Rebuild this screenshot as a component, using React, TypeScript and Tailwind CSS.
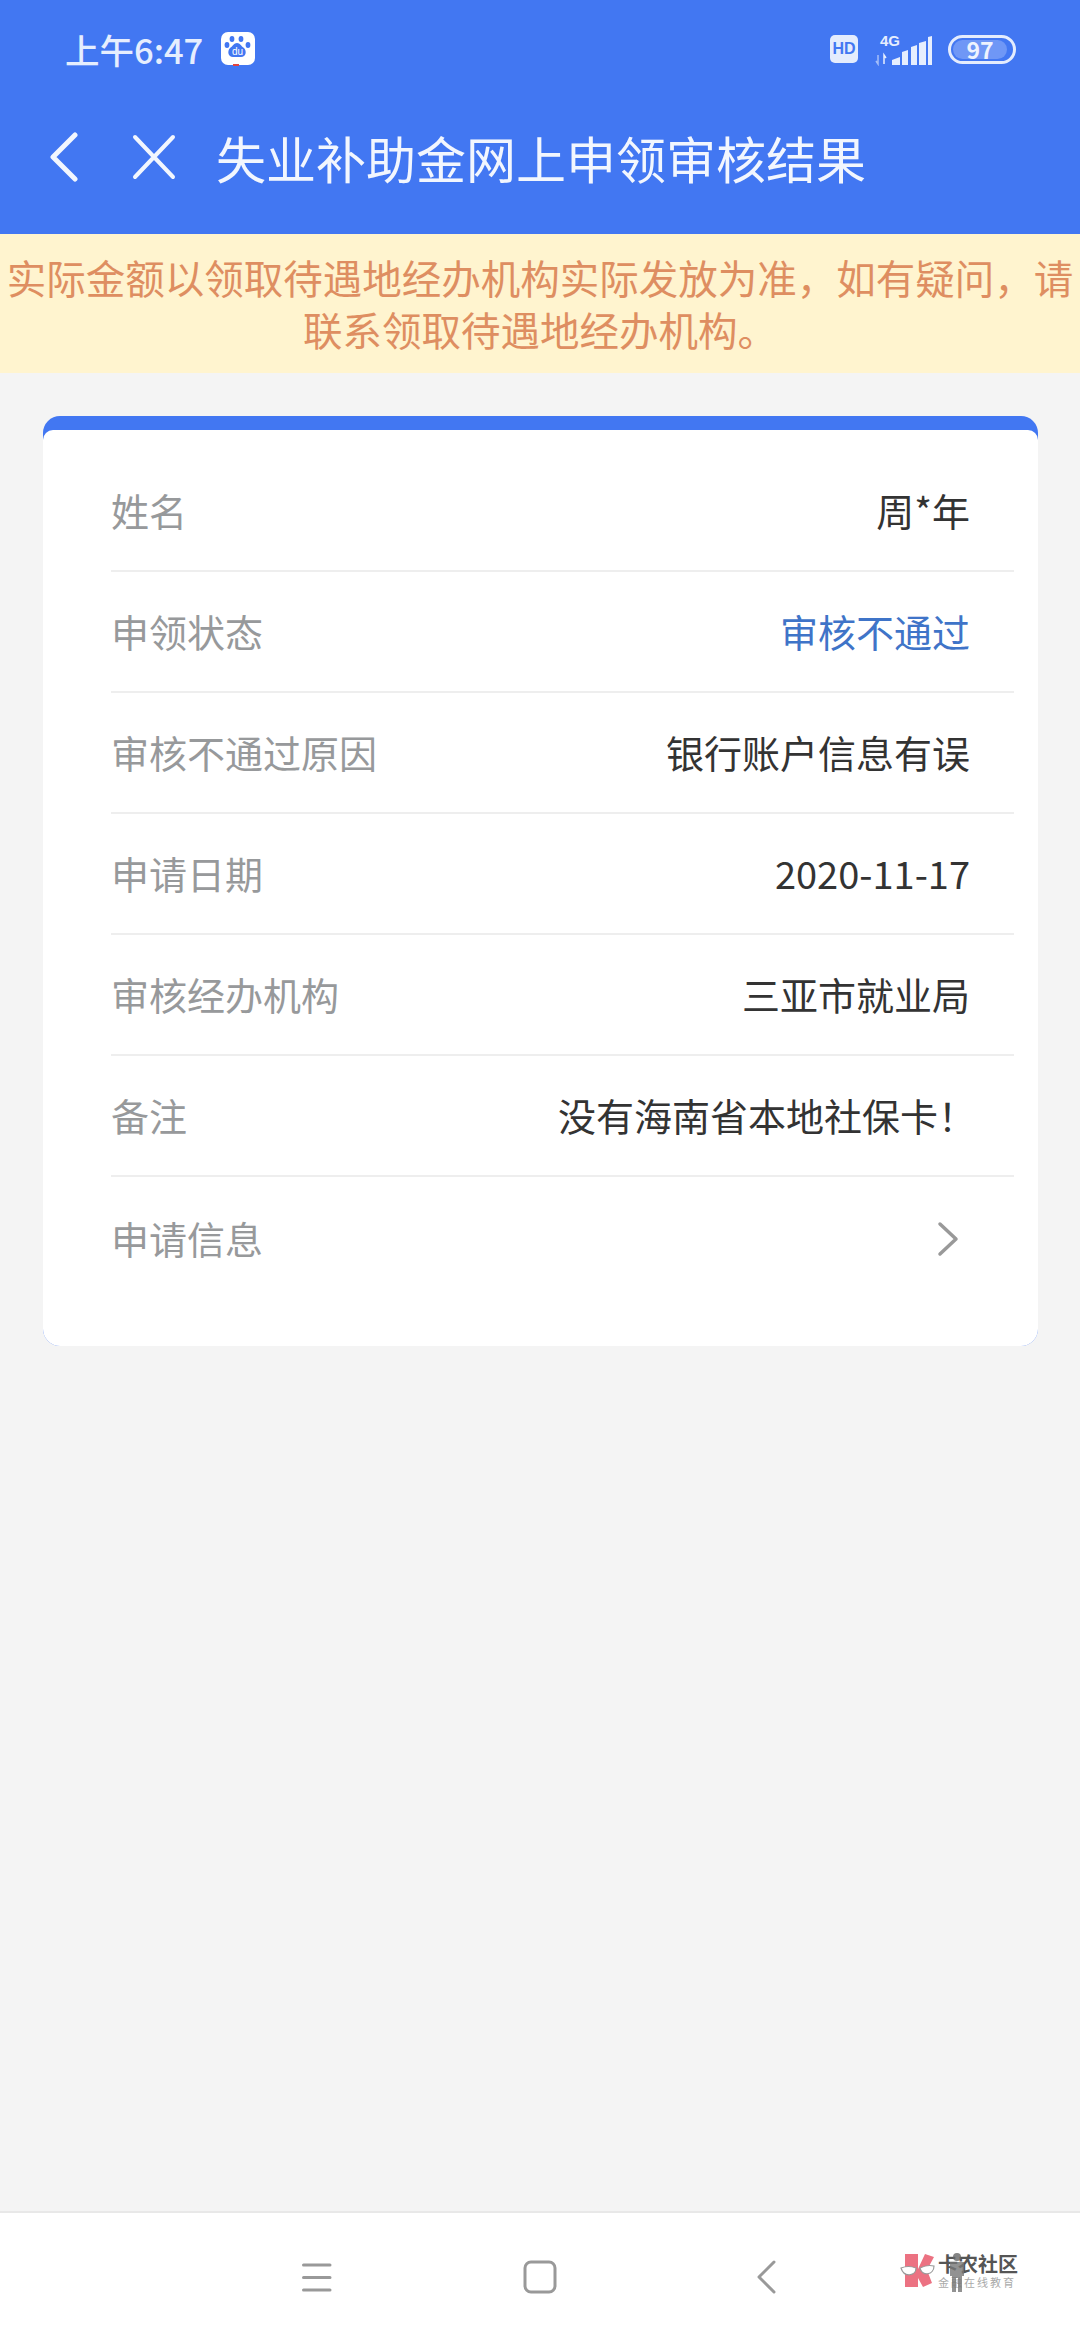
const rows = [
  { label: "姓名", value: "周*年" },
  { label: "申领状态", value: "审核不通过", blue: true },
  { label: "审核不通过原因", value: "银行账户信息有误" },
  { label: "申请日期", value: "2020-11-17" },
  { label: "审核经办机构", value: "三亚市就业局" },
  { label: "备注", value: "没有海南省本地社保卡！", offset: true },
];

const StatusBar = () => (
  <div className="flex h-[98px] items-center justify-between pl-[65px] pr-[64px]">
    <div className="flex items-center gap-[18px]">
      <span className="text-[34.5px] font-medium leading-[44px] text-[#e6eefe]">上午6:47</span>
      <svg width="34" height="34" viewBox="0 0 34 34">
        <rect width="34" height="33" rx="7" fill="#fff" />
        <rect x="12" y="32" width="6" height="2" fill="#e2433f" />
        <g fill="#4277f2">
          <ellipse cx="11" cy="7" rx="2.4" ry="3" />
          <ellipse cx="20" cy="7" rx="2.4" ry="3" />
          <ellipse cx="6" cy="13" rx="2.4" ry="3" />
          <ellipse cx="27" cy="13" rx="2.4" ry="3" />
          <path d="M16 11c3 0 4 3 7 5 3 3 2 9-3 9H12c-5 0-6-6-3-9 3-2 4-5 7-5z" />
        </g>
        <text x="16.5" y="23" textAnchor="middle" fontSize="10" fill="#fff" fontFamily="Liberation Sans">du</text>
      </svg>
    </div>
    <div className="flex items-center">
      <span className="flex h-[28px] w-[28px] items-center justify-center rounded-[5px] bg-[#e4ecfd] font-['Liberation_Sans'] text-[16px] font-bold leading-none text-[#4277f2]">
        HD
      </span>
      <svg width="58" height="34" viewBox="0 -3 58 34" className="ml-[17px] text-[#e6eefe]">
        <text x="5" y="10.5" fontSize="15" fontWeight="700" fill="currentColor" fontFamily="Liberation Sans">4G</text>
        <path d="M3 20v9l-2-3" stroke="currentColor" strokeWidth="1.5" fill="none" opacity="0.6" />
        <path d="M9 29v-9l2 3" stroke="currentColor" strokeWidth="1.5" fill="none" />
        <path d="M17 30v-5l8-3v8zM27 30V17l6-2v15zM36 30V12l6-2v20zM44 30V8l7-2v24zM53 30V2l4-1v29z" fill="currentColor" />
      </svg>
      <div className="ml-[15px] flex h-[29px] w-[68px] items-center rounded-full border-[3px] border-[#e4ecfd] p-[2px]">
        <div className="flex h-full w-[54px] items-center justify-center rounded-full bg-[#6f97f6] text-[23px] font-bold leading-none text-[#eef3fe]">
          97
        </div>
      </div>
    </div>
  </div>
);

const NavBar = () => (
  <div className="flex h-[118px] items-center pl-[49px]">
    <svg width="30" height="50" viewBox="0 0 30 50" className="text-[#f2f6fe]">
      <path d="M26 3 4 25l22 22" stroke="currentColor" strokeWidth="5" strokeLinecap="round" strokeLinejoin="round" fill="none" />
    </svg>
    <svg width="46" height="46" viewBox="0 0 46 46" className="ml-[52px] text-[#f2f6fe]">
      <path d="M4 3l38 40M42 3 4 43" stroke="currentColor" strokeWidth="4" strokeLinecap="round" fill="none" />
    </svg>
    <h1 className="ml-[39px] text-[50px] font-normal leading-none text-[#f2f6fe]">失业补助金网上申领审核结果</h1>
  </div>
);

const Watermark = () => (
  <div className="absolute left-[900px] top-[2253px] flex items-start gap-[3px]">
    <svg width="35" height="36" viewBox="0 0 35 36">
      <path d="M5 1l13 0 0 15L25 1l9 3-7 13 5 13-9 4-5-9 0 9-13 0z" fill="#ec7282" />
      <path d="M1 15c5-2 10-2 15 0 0 8-12 10-15 0zM20 15c4-2 10-3 14-2 0 9-12 11-14 2z" fill="#fff" stroke="#999" strokeWidth="1.2" />
    </svg>
    <div className="flex flex-col">
      <span className="text-[20px] font-bold leading-[22px] text-[#555]">卡农社区</span>
      <span className="text-[11px] leading-[14px] tracking-[2px] text-[#aaa]">金融在线教育</span>
    </div>
    <svg width="16" height="40" viewBox="0 0 16 40" className="absolute left-[49px] top-[-1px] opacity-80">
      <circle cx="8" cy="5" r="4" fill="#666" />
      <path d="M1 10h14v14h-2v16H9V26H7v14H3V24H1z" fill="#777" />
    </svg>
  </div>
);

export default function App() {
  return (
    <div
      className="relative flex h-[2340px] w-[1080px] flex-col overflow-hidden bg-[#f4f4f4]"
      style={{ fontFamily: '"Noto Sans CJK SC", "Noto Sans", sans-serif' }}
    >
      <header className="h-[234px] shrink-0 bg-[#4277f2]">
        <StatusBar />
        <NavBar />
      </header>

      <div className="flex h-[139px] shrink-0 items-center bg-[#fff4cf] pb-[2px] text-center text-[39.5px] leading-[52px] text-[#de8e61]">
        <p className="w-full">实际金额以领取待遇地经办机构实际发放为准，如有疑问，请联系领取待遇地经办机构。</p>
      </div>

      <main className="flex-1 pl-[43px] pr-[42px] pt-[43px]">
        <div className="overflow-hidden rounded-[17px] bg-[#4277f2] pt-[14px]">
          <div className="rounded-t-[10px] bg-white pb-[48px] pl-[68px] pr-[24px] pt-[21px]">
            {rows.map((row) => (
              <div
                key={row.label}
                className="flex h-[121px] items-center justify-between border-b-2 border-[#eeeeee] pb-[2px] pr-[44px] text-[38px]"
              >
                <span className="text-[#97999b]">{row.label}</span>
                <span className={`${row.blue ? "text-[#3f74c8]" : "text-[#333333]"} ${row.offset ? "-mr-[6px]" : ""}`}>
                  {row.value}
                </span>
              </div>
            ))}
            <div className="flex h-[121px] items-center justify-between pr-[55px] text-[38px]">
              <span className="text-[#97999b]">申请信息</span>
              <svg width="22" height="36" viewBox="0 0 22 36" className="mt-[3px] text-[#999999]">
                <path d="M3 3l16 15L3 33" stroke="currentColor" strokeWidth="3.5" strokeLinecap="round" strokeLinejoin="round" fill="none" />
              </svg>
            </div>
          </div>
        </div>
      </main>

      <footer className="flex h-[129px] shrink-0 items-center border-t-2 border-[#e8e8e8] bg-white pl-[301px]">
        <svg width="32" height="32" viewBox="0 0 32 32" className="text-[#999999]">
          <path d="M2.5 4h26.5M2.5 16.5h26.5M2.5 29h26.5" stroke="currentColor" strokeWidth="3" strokeLinecap="round" />
        </svg>
        <svg width="34" height="34" viewBox="0 0 34 34" className="ml-[190px] text-[#999999]">
          <rect x="2" y="2" width="30" height="30" rx="6" stroke="currentColor" strokeWidth="3" fill="none" />
        </svg>
        <svg width="20" height="34" viewBox="0 0 20 34" className="ml-[200px] text-[#999999]">
          <path d="M17 2 2 17l15 15" stroke="currentColor" strokeWidth="3" strokeLinecap="round" strokeLinejoin="round" fill="none" />
        </svg>
      </footer>

      <Watermark />
    </div>
  );
}
